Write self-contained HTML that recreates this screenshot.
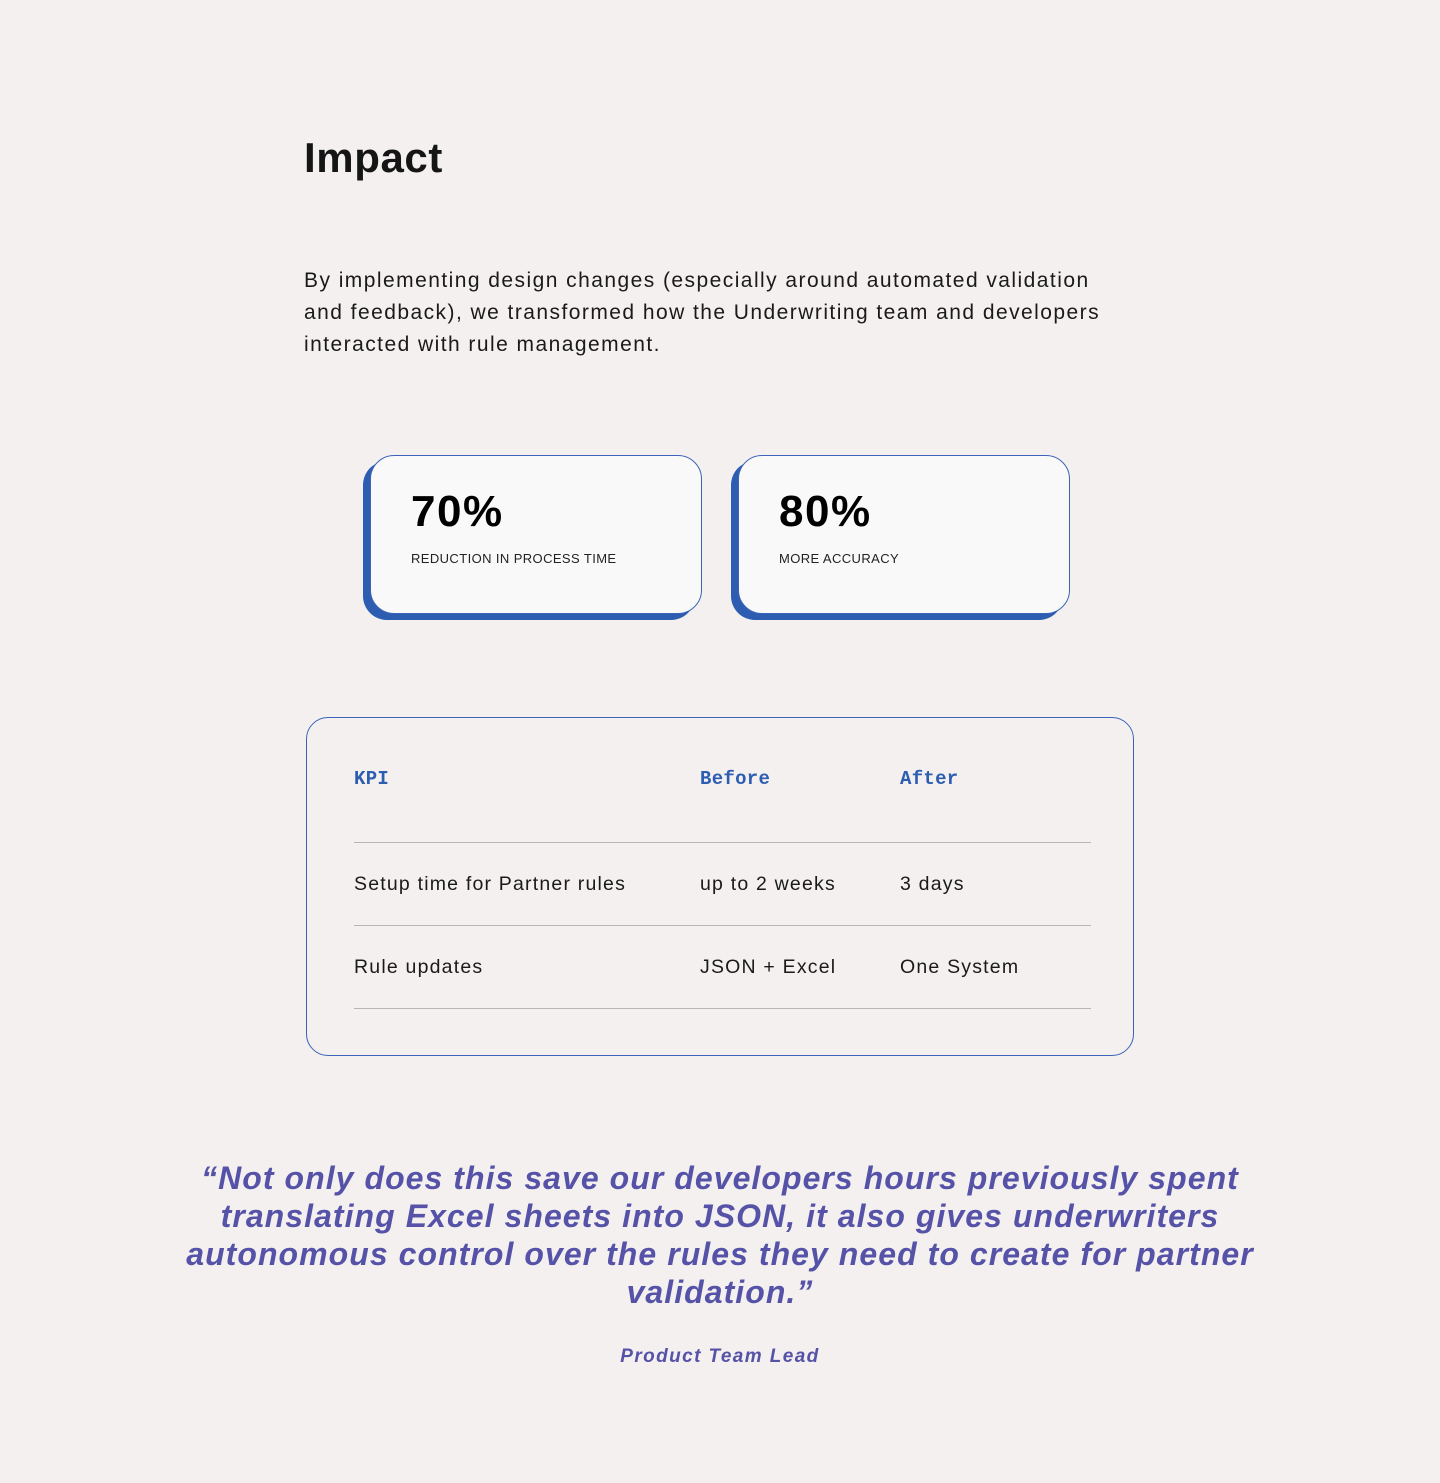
<!DOCTYPE html>
<html><head><style>
body{margin:0;background:#f3f0ef;font-family:"Liberation Sans",sans-serif;color:#1a1a1a;}
.wrap{position:relative;width:1440px;height:1483px;}
h1{position:absolute;left:304px;top:133px;margin:0;font-size:42px;font-weight:700;line-height:50px;color:#151515;letter-spacing:0.6px}
.intro{position:absolute;left:304px;top:265px;width:900px;margin:0;font-size:21px;line-height:32px;letter-spacing:1.45px;color:#1a1a1a;white-space:nowrap}
.card{position:absolute;top:455px;width:330px;height:157px;background:#f9f9f9;border:1px solid #3b64b8;border-radius:24px;box-shadow:-7px 6px 0 #2d5db1;}
.card .n{position:absolute;left:40px;top:30px;font-size:44px;font-weight:700;color:#000;line-height:52px;letter-spacing:1.5px}
.card .l{position:absolute;left:40px;top:95px;font-size:13px;letter-spacing:0.4px;color:#222}
.tbl{position:absolute;left:306px;top:717px;width:826px;height:337px;border:1px solid #3b64b8;border-radius:22px;}
.h{position:absolute;top:50px;font-family:"Liberation Mono",monospace;font-weight:700;font-size:19px;color:#2d5db1;letter-spacing:0.3px}
.c{position:absolute;font-size:19.5px;color:#1a1a1a;letter-spacing:1.2px}
.line{position:absolute;left:47px;width:737px;height:1px;background:#b8b5b4}
.q{position:absolute;left:120px;width:1200px;top:1159px;text-align:center;font-size:32px;line-height:38px;font-style:italic;font-weight:700;color:#5552a8;letter-spacing:1.05px;margin:0}
.a{position:absolute;left:0;width:1440px;top:1346px;text-align:center;font-size:19px;font-style:italic;font-weight:700;color:#5552a8;letter-spacing:1.4px}
</style></head><body><div class="wrap">
<h1>Impact</h1>
<p class="intro">By implementing design changes (especially around automated validation<br>and feedback), we transformed how the Underwriting team and developers<br>interacted with rule management.</p>
<div class="card" style="left:370px"><div class="n">70%</div><div class="l">REDUCTION IN PROCESS TIME</div></div>
<div class="card" style="left:738px"><div class="n">80%</div><div class="l">MORE ACCURACY</div></div>
<div class="tbl">
<div class="h" style="left:47px">KPI</div><div class="h" style="left:393px">Before</div><div class="h" style="left:593px">After</div>
<div class="line" style="top:124px"></div>
<div class="c" style="left:47px;top:155px">Setup time for Partner rules</div><div class="c" style="left:393px;top:155px">up to 2 weeks</div><div class="c" style="left:593px;top:155px">3 days</div>
<div class="line" style="top:207px"></div>
<div class="c" style="left:47px;top:238px">Rule updates</div><div class="c" style="left:393px;top:238px">JSON + Excel</div><div class="c" style="left:593px;top:238px">One System</div>
<div class="line" style="top:290px"></div>
</div>
<p class="q">“Not only does this save our developers hours previously spent translating Excel sheets into JSON, it also gives underwriters autonomous control over the rules they need to create for partner validation.”</p>
<div class="a">Product Team Lead</div>
</div></body></html>
